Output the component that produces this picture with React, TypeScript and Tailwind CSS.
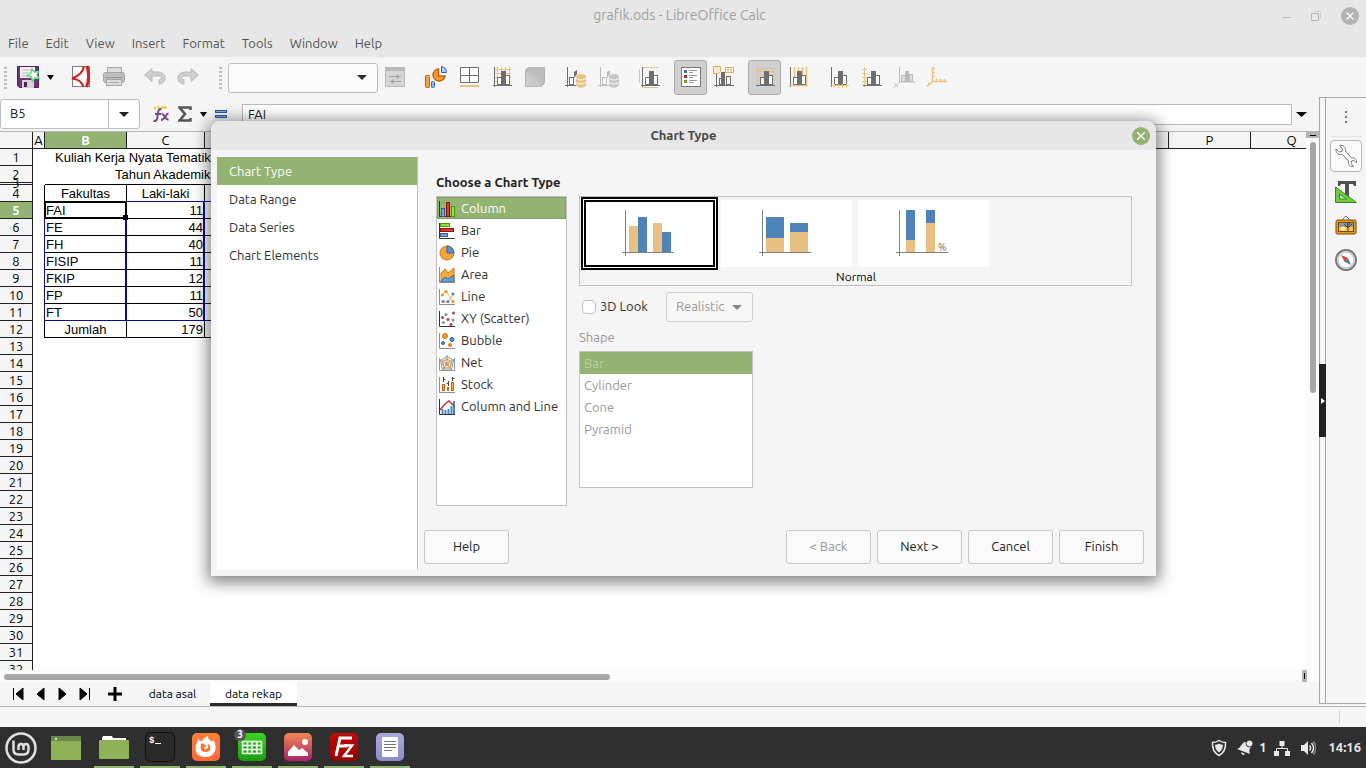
import type { ReactNode } from "react";
import clsx from "clsx";
import { X } from "lucide-react";

const UI_FONT = "font-['Ubuntu','Noto_Sans',sans-serif]";
const CELL_FONT = "font-['Liberation_Sans',Arial,sans-serif]";

const DARK = "#6e6e6e";
const TAN = "#e9c382";
const PALE = "#bdbdbd";

/* ---------- toolbar icons ---------- */

const Icon = ({ children, size = 24 }: { children: ReactNode; size?: number }) => (
  <svg width={size} height={size} viewBox={`0 0 ${size} ${size}`} fill="none" aria-hidden="true" className="shrink-0">
    {children}
  </svg>
);

const Bars = ({ color = DARK, fill = "#fff" }: { color?: string; fill?: string }) => (
  <g>
    <rect x="7.5" y="12.5" width="4" height="7" fill={fill} stroke={color} />
    <rect x="15.5" y="10.5" width="4" height="9" fill={fill} stroke={color} />
    <rect x="11" y="6" width="5" height="14" fill={color} />
  </g>
);

const Axes = ({ x = DARK, y = DARK }: { x?: string; y?: string }) => (
  <g>
    <path d="M4.5 2V22" stroke={y} />
    <path d="M3 20.5H22" stroke={x} />
  </g>
);

const SaveIcon = () => (
  <Icon>
    <path d="M1.5 1.5h21v21h-19l-2-2z" fill="#6b3577" stroke="#4b1f58" />
    <rect x="4" y="2" width="15" height="11" fill="#f2f2f2" />
    <path d="M6 5h9M6 8h7M6 11h8" stroke="#b9b9b9" />
    <rect x="6" y="15" width="12" height="8" fill="#d3d3d3" />
    <rect x="8" y="17" width="3" height="5" fill="#4b1f58" />
    <path d="M16 4l2.500 3 4-.5-1.500 3.500 2 3.500-4-.5-2.500 3-1.200-4-3.800-1.500 3.500-2.500z" fill="#fff" stroke="#5bd67a" strokeWidth="1.500" />
  </Icon>
);

const PdfIcon = () => (
  <Icon>
    <rect x="3.500" y="1.500" width="17" height="20" fill="#fdfdfd" stroke="#7d7d7d" />
    <path d="M15 1C14 7 10 11 3 13.500 9 14 13 17 14.500 22" stroke="#cf2027" strokeWidth="2" />
    <path d="M18 1C20 8 20 16 17.500 22" stroke="#cf2027" strokeWidth="3" />
  </Icon>
);

const PrintIcon = () => (
  <Icon>
    <rect x="5.500" y="2.500" width="14" height="6" fill="#dcdcdc" stroke="#a8a8a8" />
    <rect x="1.500" y="7.500" width="21" height="10" rx="2" fill="#bdbdbd" stroke="#a5a5a5" />
    <path d="M3 12.500h18" stroke="#999" />
    <rect x="4.500" y="14.500" width="15" height="6" fill="#dedede" stroke="#a5a5a5" />
    <path d="M7 17.500h10" stroke="#aaa" />
  </Icon>
);

const UndoIcon = ({ flip = false }: { flip?: boolean }) => (
  <Icon>
    <g transform={flip ? "translate(24 0) scale(-1 1)" : undefined}>
      <path d="M1.500 10L9 3.500V7h5.500c4.500 0 7.500 2.500 7.500 6 0 3-2 6-6 6v-4c1.500 0 2.500-1 2.500-2 0-1.300-1.500-2-4-2H9v5.500z" fill="#cfcfcf" stroke="#b9b9b9" />
    </g>
  </Icon>
);

const PropertiesIcon = () => (
  <Icon>
    <rect x="2.500" y="2.500" width="19" height="19" fill="#d6d6d6" stroke="#bbb" />
    <rect x="2" y="2" width="20" height="4" fill="#b9b9b9" />
    <path d="M6 11.500h12M6 16.500h12" stroke="#a3a3a3" />
    <path d="M14.500 9.500v4M9.500 14.500v4" stroke="#a3a3a3" strokeWidth="2" />
  </Icon>
);

const ChartTypeIcon = () => (
  <Icon>
    <rect x="1.500" y="10.500" width="4" height="12" rx="1" fill="#f6a240" stroke="#c2600a" />
    <rect x="7.500" y="16.500" width="3" height="6" rx="1" fill="#8ab8f0" stroke="#2d62a8" />
    <path d="M14.500 4a6 6 0 1 0 6.500 7h-6.500z" fill="#f69a2e" stroke="#c2600a" strokeWidth="1.500" />
    <path d="M17.500 1.500c3 .5 5 2.500 5 6h-5z" fill="#a9d0f7" stroke="#2d62a8" />
  </Icon>
);

const TableIcon = () => (
  <Icon>
    <path d="M3.500 2.500h18v15h-18zM12.500 2.500v15M3.500 10.500h18" fill="#fff" stroke={DARK} />
    <rect x="3" y="20" width="19" height="2" fill={TAN} />
  </Icon>
);

const GridIcon = () => (
  <Icon>
    <path d="M7.500 2v18M11.500 2v18M15.500 2v18M19.500 2v18M4 4.500h17M4 8.500h17M4 12.500h17M4 16.500h17" stroke={TAN} />
    <Bars />
    <Axes />
  </Icon>
);

const CubeIcon = () => (
  <Icon>
    <defs>
      <linearGradient id="cube" x1="1" y1="0" x2="0" y2="1">
        <stop offset="0" stopColor="#b9b9b9" />
        <stop offset="1" stopColor="#d4d4d4" />
      </linearGradient>
    </defs>
    <path d="M2.500 7c0-3 1.500-4.500 4.500-4.500h14.500V16c0 3.500-2 5.500-5 5.500h-14z" fill="#bcbcbc" stroke="#b3b3b3" />
    <rect x="3" y="7" width="14" height="14" fill="url(#cube)" />
  </Icon>
);

const DataIcon = ({ color = DARK, disk = TAN }: { color?: string; disk?: string }) => (
  <Icon>
    <path d="M3.500 2v20M1 20.500h11" stroke={color} />
    <rect x="5.500" y="12.500" width="4" height="7" fill="#fff" stroke={color} />
    <path d="M10 7l3-2v4l-3 4z" fill={color} />
    <path d="M12 12v8c0 3.500 10 3.500 10 0v-8z" fill={disk} />
    <ellipse cx="17" cy="11.500" rx="5" ry="2.500" fill={disk} />
    <path d="M12 13c1 2.500 9 2.500 10 0M12 17c1 2.500 9 2.500 10 0" stroke="#fff" />
  </Icon>
);

const TitlesIcon = () => (
  <Icon>
    <path d="M4 2.500h16M4 22.500h16M1.500 4v14" stroke={TAN} />
    <Bars />
    <Axes />
  </Icon>
);

const LegendIcon = () => (
  <Icon>
    <rect x="2.500" y="2.500" width="19" height="19" fill="#fff" stroke="#777" />
    <rect x="5" y="5" width="3" height="3" fill="#3f6fa8" />
    <rect x="5" y="10" width="3" height="3" fill="#b82020" />
    <rect x="5" y="15" width="3" height="3" fill="#62a818" />
    <path d="M10 5.500h8M10 7.500h4M10 10.500h8M10 12.500h4M10 15.500h8M10 17.500h4" stroke="#999" />
  </Icon>
);

const LabelsIcon = () => (
  <Icon>
    <path d="M4.500 8v14M2 20.500h20" stroke={DARK} />
    <rect x="7.500" y="13.500" width="3" height="6" fill="#fff" stroke={DARK} />
    <rect x="9" y="7" width="4" height="13" fill={DARK} />
    <rect x="14.500" y="11.500" width="4" height="8" fill="#fff" stroke={DARK} />
    <path d="M1.500 1.500h7v5l-2 2h-5z" fill="#f8ebcf" stroke="#d9ad55" />
    <rect x="13.500" y="2.500" width="8" height="5" fill="#fff" stroke="#d9b35f" />
    <path d="M15 4.500h2M18 4.500h2M15 6h2M18 6h2" stroke="#d9b35f" />
  </Icon>
);

const HorizontalGridIcon = () => (
  <Icon>
    <path d="M3 3.500h19M3 6.500h19M3 9.500h19M3 12.500h19M3 15.500h19" stroke={TAN} />
    <Bars />
    <path d="M4.500 2v20" stroke={TAN} />
    <path d="M3 20.500h19" stroke={DARK} />
  </Icon>
);

const VerticalGridIcon = () => (
  <Icon>
    <path d="M8.500 2v20M12.500 2v20M16.500 2v20M20.500 2v20" stroke={TAN} strokeWidth="1.500" />
    <Bars />
    <Axes x={TAN} />
  </Icon>
);

const XAxisIcon = () => (
  <Icon>
    <Bars />
    <Axes x={TAN} />
    <path d="M7.500 19v4M11.500 19v4M15.500 19v4M19.500 19v4" stroke={TAN} />
  </Icon>
);

const YAxisIcon = () => (
  <Icon>
    <Bars />
    <Axes y={TAN} />
    <path d="M2 4.500h5M2 8.500h5M2 12.500h5M2 16.500h5" stroke={TAN} />
  </Icon>
);

const ZAxisIcon = () => (
  <Icon>
    <path d="M6.500 2v15h16M6.500 17L1 22.500M1 18l4 4" stroke={PALE} />
    <rect x="8.500" y="10.500" width="4" height="6" fill="#ddd" stroke={PALE} />
    <rect x="12" y="6" width="4" height="11" fill={PALE} />
    <rect x="16.500" y="9.500" width="3" height="7" fill="#ddd" stroke={PALE} />
  </Icon>
);

const AllAxesIcon = () => (
  <Icon>
    <path d="M6.500 2v14.500H21M6.500 16.500L1 21.500M6 3.500h3M6 7.500h3M6 11.500h3M10.500 14v3M14.500 14v3M18.500 14v3M2 18l2 2" stroke={TAN} strokeWidth="1.500" />
  </Icon>
);

const Caret = ({ width = 9 }: { width?: number }) => (
  <svg width={width} height="5" viewBox="0 0 10 5" preserveAspectRatio="none" aria-hidden="true">
    <path d="M0 0h10L5 5z" fill="currentColor" />
  </svg>
);

/* ---------- chart type icons ---------- */

const SmallAxes = ({ color = "#8d8d8d" }: { color?: string }) => <path d="M.5 0v15.500H16" stroke={color} />;

const chartIcons: Record<string, ReactNode> = {
  Column: (
    <>
      <SmallAxes color="#333" />
      <rect x="2.500" y="7.500" width="3" height="8" fill="#7aa3cf" stroke="#355f8f" />
      <rect x="7.500" y="1.500" width="3" height="14" fill="#e03535" stroke="#8f1010" />
      <rect x="12.500" y="5.500" width="3" height="10" fill="#8ae234" stroke="#4e9a06" />
    </>
  ),
  Bar: (
    <>
      <SmallAxes color="#333" />
      <rect x="1.500" y=".5" width="9" height="3" fill="#8ae234" stroke="#4e9a06" />
      <rect x="1.500" y="5.500" width="13" height="3" fill="#e03535" stroke="#8f1010" />
      <rect x="1.500" y="10.500" width="7" height="3" fill="#7aa3cf" stroke="#355f8f" />
    </>
  ),
  Pie: (
    <>
      <circle cx="8" cy="8" r="7" fill="#f9a23c" stroke="#d0761a" />
      <path d="M8 8V1a7 7 0 0 1 7 7z" fill="#5b93d3" stroke="#2d62a8" />
    </>
  ),
  Area: (
    <>
      <path d="M2 6l4-4 3 4 6-5v14H2z" fill="#f9a93c" stroke="#cb7818" />
      <path d="M2 14l4-4 3 2 6-4v7H2z" fill="#6b9fd8" stroke="#3465a4" />
      <SmallAxes />
    </>
  ),
  Line: (
    <>
      <SmallAxes />
      <path d="M3 6l4-4 7 11M4 13h5l5-8" stroke="#f0ad5a" />
      <circle cx="3.500" cy="6" r="1.500" fill="#f08a1c" />
      <circle cx="7" cy="2.500" r="1.500" fill="#f08a1c" />
      <circle cx="14" cy="12.500" r="1.500" fill="#f08a1c" />
      <circle cx="4" cy="12.500" r="1.500" fill="#4f83c0" />
      <circle cx="9" cy="12.500" r="1.500" fill="#4f83c0" />
      <circle cx="14" cy="5" r="1.500" fill="#4f83c0" />
    </>
  ),
  "XY (Scatter)": (
    <>
      <SmallAxes color="#333" />
      <circle cx="3.500" cy="6.500" r="1.500" fill="#c23a4a" />
      <circle cx="9" cy="8.500" r="1.500" fill="#c23a4a" />
      <circle cx="14.500" cy="2" r="1.500" fill="#c23a4a" />
      <circle cx="12" cy="13.500" r="1.500" fill="#c23a4a" />
      <circle cx="7" cy="3.500" r="1.500" fill="#6e93c0" />
      <circle cx="4.500" cy="11.500" r="1.500" fill="#6e93c0" />
      <circle cx="14" cy="9" r="1.500" fill="#6e93c0" />
    </>
  ),
  Bubble: (
    <>
      <SmallAxes />
      <circle cx="6" cy="3" r="2.500" fill="#f59a35" stroke="#d0701a" />
      <circle cx="13" cy="6.500" r="2" fill="#5b8fcc" stroke="#2d5f9e" />
      <circle cx="4" cy="10" r="1.500" fill="#5b8fcc" stroke="#2d5f9e" />
      <circle cx="11" cy="12" r="1.500" fill="#f59a35" stroke="#d0701a" />
    </>
  ),
  Net: (
    <>
      <path d="M8 1.500l6.500 4-2 9.500h-9l-2-9.500zM8 0v8M16 4L8 8.500 13 16M3 16l5-7.500L0 4M.5 3v12.500h15V3" stroke="#7d98b8" />
      <path d="M8 4l4.500 3-1.500 6H5L3.500 7z" stroke="#ee9a3a" strokeWidth="1.500" />
      <path d="M8 7l2 1.500-1 2H7l-1-2z" stroke="#ee9a3a" />
    </>
  ),
  Stock: (
    <>
      <SmallAxes />
      <path d="M4.500 0v5M4.500 2.500h2M9.500 4v5M7.500 6.500h2M13.500 0v4M13.500 1.500h2" stroke="#444" />
      <rect x="3.500" y="7.500" width="2" height="6" fill="#f9a23c" stroke="#c9651a" />
      <rect x="8.500" y="10.500" width="1" height="3" fill="#f9a23c" stroke="#c9651a" />
      <rect x="12.500" y="5.500" width="2" height="8" fill="#f9a23c" stroke="#c9651a" />
    </>
  ),
  "Column and Line": (
    <>
      <path d="M3.500 15v-5M6.500 15v-4M9.500 15v-5M12.500 15V7M15 15V2" stroke="#4f83c0" strokeWidth="2" />
      <path d="M1 11l5-6 4-3 5 5" stroke="#c9303c" strokeWidth="1.500" />
      <SmallAxes color="#333" />
    </>
  ),
};

const chartTypes = Object.keys(chartIcons);

/* ---------- window chrome ---------- */

const TitleBar = () => (
  <div className="grid h-[31px] grid-cols-[1fr_auto_1fr] items-center bg-[#e7e7e7] pr-[7px] text-[14px] text-[#a0a0a0]">
    <span />
    <h1>grafik.ods - LibreOffice Calc</h1>
    <div className="flex items-center justify-end gap-5 text-[#b3b3b3]">
      <button type="button" aria-label="Minimize" className="flex h-4 w-2 items-center">
        <span className="mt-1 h-px w-2 bg-current" />
      </button>
      <button type="button" aria-label="Restore">
        <svg width="10" height="10" viewBox="0 0 10 10" fill="none">
          <path d="M.5 2.500h7v7h-7z" stroke="currentColor" />
          <path d="M3 .5h6.500V7" stroke="#cfcfcf" />
        </svg>
      </button>
      <button type="button" aria-label="Close" className="flex size-[18px] items-center justify-center rounded-full bg-[#b3b3b3] text-white">
        <X size={12} strokeWidth={2.500} />
      </button>
    </div>
  </div>
);

const menus = ["File", "Edit", "View", "Insert", "Format", "Tools", "Window", "Help"];

const MenuBar = () => (
  <nav className="flex h-[27px] items-center gap-[17px] border-b border-[#efefef] bg-[#e7e7e7] px-2 text-[13px] text-[#555]">
    {menus.map((menu) => (
      <button key={menu} type="button">{menu}</button>
    ))}
  </nav>
);

const Tool = ({ label, children, pressed = false }: { label: string; children: ReactNode; pressed?: boolean }) => (
  <button
    type="button"
    aria-label={label}
    aria-pressed={pressed}
    className={clsx(
      "flex h-[35px] w-[33px] shrink-0 items-center justify-center rounded-[3px] border pb-px pl-px",
      pressed ? "border-[#a9a9a9] bg-[#d0d0d0]" : "border-transparent"
    )}
  >
    {children}
  </button>
);

const Grip = () => (
  <div className="flex w-[11px] shrink-0 flex-col items-center gap-0.5">
    {[0, 1, 2, 3, 4, 5].map((i) => (
      <span key={i} className="h-0.5 w-[3px] bg-[#bcbcbc]" />
    ))}
  </div>
);

const Toolbar = () => (
  <div className="flex h-[39px] items-center bg-[#f5f5f5]">
    <Grip />
    <Tool label="Save"><SaveIcon /></Tool>
    <button type="button" aria-label="Save options" className="flex h-8 w-3 items-center justify-center text-black">
      <Caret width={7} />
    </button>
    <div className="ml-2 flex">
      <Tool label="Export as PDF"><PdfIcon /></Tool>
      <Tool label="Print"><PrintIcon /></Tool>
    </div>
    <div className="ml-2 flex">
      <Tool label="Undo"><UndoIcon /></Tool>
      <Tool label="Redo"><UndoIcon flip /></Tool>
    </div>
    <div className="ml-[11px]"><Grip /></div>
    <div className="relative ml-0.5 w-[150px]">
      <select aria-label="Chart element" className="block h-[30px] w-full appearance-none rounded-[3px] border border-[#bdbdbd] bg-[#fafafa]">
        <option> </option>
      </select>
      <span className="pointer-events-none absolute inset-y-0 right-[11px] flex items-center text-[#2b2b2b]">
        <Caret width={10} />
      </span>
    </div>
    <div className="flex gap-2">
      <Tool label="Format selection"><PropertiesIcon /></Tool>
      <div className="flex">
        <Tool label="Chart type"><ChartTypeIcon /></Tool>
        <Tool label="Data table"><TableIcon /></Tool>
        <Tool label="Grids"><GridIcon /></Tool>
        <Tool label="3D view"><CubeIcon /></Tool>
      </div>
      <div className="flex">
        <Tool label="Data ranges"><DataIcon /></Tool>
        <Tool label="Data series"><DataIcon color={PALE} disk="#c6c6c6" /></Tool>
      </div>
      <Tool label="Titles"><TitlesIcon /></Tool>
      <div className="flex">
        <Tool label="Legend" pressed><LegendIcon /></Tool>
        <Tool label="Data labels"><LabelsIcon /></Tool>
      </div>
      <div className="flex">
        <Tool label="Horizontal grids" pressed><HorizontalGridIcon /></Tool>
        <Tool label="Vertical grids"><VerticalGridIcon /></Tool>
      </div>
      <div className="flex">
        <Tool label="X axis"><XAxisIcon /></Tool>
        <Tool label="Y axis"><YAxisIcon /></Tool>
        <Tool label="Z axis"><ZAxisIcon /></Tool>
        <Tool label="All axes"><AllAxesIcon /></Tool>
      </div>
    </div>
  </div>
);

const FormulaBar = () => (
  <div className="flex h-[35px] items-center border-b border-[#b5b5b5] bg-[#f5f5f5] text-[13px] text-[#222]">
    <div className="flex h-[30px] w-[140px] shrink-0 rounded-[3px] border border-[#bdbdbd] bg-white">
      <input aria-label="Name box" defaultValue="B5" className="w-[108px] border-r border-[#bdbdbd] px-[9px] outline-none" />
      <button type="button" aria-label="Name box list" className="flex flex-1 items-center justify-center">
        <Caret width={10} />
      </button>
    </div>
    <button type="button" aria-label="Function wizard" className="ml-3 flex w-[18px] justify-center">
      <svg width="18" height="18" viewBox="0 0 18 18" fill="none">
        <path d="M2 4l2-2M6 3l1-2M9 2l4 1M12 2l3 1" stroke="#f0c93a" strokeWidth="2" />
        <path d="M9.500 4.500c-2-1-3 0-3.300 2.500l-1 6c-.4 2.500-1.700 3.500-3.700 2.500M3 9h6" stroke="#7a4490" strokeWidth="2" />
        <path d="M9.500 9c3-1 3 6 7 5.500M16.500 8.500c-3 0-3.500 6.500-7.500 6.500" stroke="#7a4490" strokeWidth="2" />
      </svg>
    </button>
    <button type="button" aria-label="Select function" className="ml-2 flex items-center gap-2 text-black">
      <svg width="14" height="16" viewBox="0 0 14 16" fill="none">
        <path d="M12.500 4V1.500h-11L7 8l-5.500 6.500h11V12" stroke="#555" strokeWidth="2.500" />
      </svg>
      <Caret width={7} />
    </button>
    <button type="button" aria-label="Formula" className="ml-2 flex w-3 flex-col gap-0.5">
      <span className="h-[3px] w-full border border-[#2d5a9a] bg-[#7fa6d8]" />
      <span className="h-[3px] w-full border border-[#2d5a9a] bg-[#7fa6d8]" />
    </button>
    <input
      aria-label="Formula input"
      defaultValue="FAI"
      className="ml-[15px] h-[21px] min-w-0 flex-1 border border-[#b9b9b9] bg-white px-[5px] outline-none"
    />
    <button type="button" aria-label="Expand formula bar" className="flex w-[27px] pl-1 text-black">
      <Caret width={11} />
    </button>
  </div>
);

/* ---------- sheet ---------- */

const data: Record<number, [string, string]> = {
  4: ["Fakultas", "Laki-laki"],
  5: ["FAI", "11"],
  6: ["FE", "44"],
  7: ["FH", "40"],
  8: ["FISIP", "11"],
  9: ["FKIP", "12"],
  10: ["FP", "11"],
  11: ["FT", "50"],
  12: ["Jumlah", "179"],
};

const rowNumbers = Array.from({ length: 32 }, (_, i) => i + 1);

const HeadCell = ({ children, active = false }: { children?: ReactNode; active?: boolean }) => (
  <th
    scope="col"
    className={clsx(
      "h-[17px] border-r border-b border-[#222] p-0",
      active ? "bg-[#92b372] font-bold text-white" : "bg-[#f5f5f5] font-normal"
    )}
  >
    {children}
  </th>
);

const RowCells = ({ row }: { row: number }) => {
  if (row === 1) {
    return <><td className="p-0" /><td colSpan={3} className="p-0 pl-[10px] whitespace-nowrap">Kuliah Kerja Nyata Tematik</td></>;
  }
  if (row === 2) {
    return <><td className="p-0" /><td colSpan={3} className="p-0 pl-[70px] whitespace-nowrap">Tahun Akademik</td></>;
  }
  if (row === 3) {
    return <><td className="p-0" />{[0, 1, 2].map((i) => <td key={i} className="border-b border-black p-0" />)}</>;
  }
  const cells = data[row];
  if (!cells) return null;

  const ranged = row >= 5 && row <= 11;
  const centered = row === 4 || row === 12;
  const cell = "p-0 pt-0.5 leading-[14px]";
  const side = ranged ? "border-r-2 border-r-[#0c0c8c]" : "border-r border-r-black";
  const bottom = row === 4 || row === 11 ? "border-b border-b-[#0c0c8c]" : "border-b border-b-black";

  return (
    <>
      <td className={clsx("p-0", ranged ? "border-r border-r-[#0c0c8c]" : "border-r border-r-black")} />
      <td className={clsx(cell, "relative", side, row === 4 ? "border-b border-b-black" : bottom, centered ? "text-center" : "pl-px")}>
        {cells[0]}
        {row === 5 && (
          <span className="absolute -inset-px -right-0.5 border-2 border-black">
            <span className="absolute -right-[3px] -bottom-[3px] size-[5px] bg-black" />
          </span>
        )}
      </td>
      <td className={clsx(cell, side, bottom, row === 4 ? "text-center" : "text-right", row === 12 && "pr-px")}>{cells[1]}</td>
      <td className={clsx("p-0", bottom)} />
    </>
  );
};

const Sheet = () => (
  <div className="min-h-0 flex-1 overflow-hidden bg-white">
    <table className={clsx("w-[calc(100%+27px)] table-fixed border-separate border-spacing-0 text-[13px] leading-4 text-black", UI_FONT)}>
      <colgroup>
        <col className="w-[33px]" />
        <col className="w-3" />
        <col className="w-[82px]" />
        <col className="w-[78px]" />
        <col className="w-[82px]" />
        <col />
        <col className="w-[82px]" />
        <col className="w-[82px]" />
      </colgroup>
      <thead>
        <tr>
          <HeadCell />
          <HeadCell>A</HeadCell>
          <HeadCell active>B</HeadCell>
          <HeadCell>C</HeadCell>
          <HeadCell />
          <HeadCell />
          <HeadCell>P</HeadCell>
          <HeadCell>Q</HeadCell>
        </tr>
      </thead>
      <tbody>
        {rowNumbers.map((row) => (
          <tr key={row} className={CELL_FONT}>
            <th
              scope="row"
              className={clsx(
                "border-r border-b border-[#222] p-0",
                UI_FONT,
                row === 3 ? "h-0.5" : "h-[17px]",
                row === 5 ? "bg-[#92b372] font-bold text-white" : "bg-[#f5f5f5] font-normal"
              )}
            >
              {row === 3 ? <div className="flex h-px items-center justify-center leading-none">3</div> : row}
            </th>
            <RowCells row={row} />
          </tr>
        ))}
      </tbody>
    </table>
  </div>
);

const tabArrows = [
  { label: "First sheet", path: "M1.500 1v12M11 1v12L4 7z" },
  { label: "Previous sheet", path: "M10 1v12L3 7z" },
  { label: "Next sheet", path: "M3 1v12l7-6z" },
  { label: "Last sheet", path: "M2 1v12l7-6zM11.500 1v12" },
];

const SheetTabs = () => (
  <div className="flex h-6 items-center bg-[#f5f5f5] pl-3 text-[12px] text-black">
    <div className="flex gap-[9px]">
      {tabArrows.map((arrow) => (
        <button key={arrow.label} type="button" aria-label={arrow.label}>
          <svg width="13" height="14" viewBox="0 0 13 14">
            <path d={arrow.path} fill="black" stroke="black" strokeWidth="1" />
          </svg>
        </button>
      ))}
    </div>
    <button type="button" aria-label="Add sheet" className="ml-4">
      <svg width="16" height="16" viewBox="0 0 16 16">
        <path d="M8 1v14M1 8h14" stroke="black" strokeWidth="3" />
      </svg>
    </button>
    <button type="button" className="ml-3 h-full w-[75px]">data asal</button>
    <button type="button" className="h-full w-[87px] border-b-[3px] border-[#2b2b2b] bg-white pt-0.5">data rekap</button>
  </div>
);

const SheetArea = () => (
  <div className="flex min-h-0 flex-1 flex-col">
    <div className="flex min-h-0 flex-1">
      <div className="flex min-w-0 flex-1 flex-col">
        <Sheet />
      </div>
      <div className="flex w-[13px] flex-col items-center bg-[#fbfbfb]">
        <div className="flex h-1.5 w-full items-center justify-center bg-[#b5b5b5]">
          <span className="h-px w-1.5 bg-black" />
        </div>
        <div className="mt-1 h-[251px] w-1.5 rounded-sm bg-[#a6a6a6]" />
      </div>
    </div>
    <div className="flex h-3 items-end justify-between bg-[#fbfbfb] pr-3 pl-1">
      <div className="mb-0.5 h-1.5 w-[606px] rounded-sm bg-[#a6a6a6]" />
      <div className="flex h-full w-[5px] items-center justify-center bg-[#b5b5b5]">
        <span className="h-1.5 w-px bg-black" />
      </div>
    </div>
    <SheetTabs />
  </div>
);

/* ---------- sidebar ---------- */

const Sidebar = () => (
  <aside className="mb-0.5 flex border-y border-[#a9a9a9] bg-[#f5f5f5]">
    <div className="flex w-[7px] flex-col items-center justify-center border-x border-[#a9a9a9]">
      <button type="button" aria-label="Hide sidebar" className="flex h-[73px] w-[7px] items-center justify-center bg-[#222]">
        <svg width="4" height="6" viewBox="0 0 4 6"><path d="M0 0l4 3-4 3z" fill="#fff" /></svg>
      </button>
    </div>
    <div className="flex w-10 flex-col items-center">
      <button type="button" aria-label="Sidebar settings" className="flex h-[39px] w-8 flex-col items-center justify-center gap-[3px] border-b border-[#e3e3e3]">
        <span className="size-0.5 bg-[#777]" />
        <span className="size-0.5 bg-[#777]" />
        <span className="size-0.5 bg-[#777]" />
      </button>
      <button type="button" aria-label="Properties" className="mt-[3px] flex size-8 items-center justify-center rounded border border-[#b5b5b5] bg-[#fafafa]">
        <Icon>
          <path
            d="M2 5l3.500 3 2.500-.5L8.500 5 5.500 1.500C9 .5 12 3 11.500 7l6 7c3-.8 5.500 1.500 5 5l-2.500-2.500-2.500.5-.3 2.500 2.300 3c-3.500.5-6-2-5-5.500l-6-6.500C5 11.500 1.500 9 2 5z"
            fill="#fff" stroke="#777"
          />
        </Icon>
      </button>
      <button type="button" aria-label="Styles" className="mt-1.5 flex h-7 w-8 items-center justify-center">
        <Icon>
          <path d="M4 1h18v5h-2l-1-2h-4v13h-4V4H7L6 6H4z" fill="#4d5154" />
          <path d="M1.500 7v15.500h21z" fill="#6ecb3a" stroke="#35891a" />
          <path d="M5.500 14v5h7z" fill="#c6eeb0" stroke="#35891a" />
        </Icon>
      </button>
      <button type="button" aria-label="Gallery" className="mt-1.5 flex h-7 w-8 items-center justify-center">
        <Icon>
          <path d="M8 6l4-4 4 4" stroke="#777" />
          <rect x="2" y="6" width="20" height="14" rx="1.500" fill="#e89b1c" stroke="#7a4a05" />
          <rect x="4.500" y="8.500" width="15" height="9" fill="#f4c46a" stroke="#7a4a05" />
          <path d="M5 9h14v4H5z" fill="#829cb3" />
          <path d="M14 17v-3l-4-4M14 14l4-4M13.500 13V9M14 12l2-3" stroke="#5a3b14" />
          <circle cx="9" cy="14.500" r="2" fill="#fff2a8" />
        </Icon>
      </button>
      <button type="button" aria-label="Navigator" className="mt-1.5 flex h-7 w-8 items-center justify-center">
        <Icon>
          <circle cx="12" cy="12" r="10" fill="#fff" stroke="#777" strokeWidth="2" />
          <circle cx="12" cy="12" r="8" stroke="#c9c9c9" strokeWidth="1.500" />
          <path d="M7 7l7 3-3.500 3.500z" fill="#e23b3b" />
          <path d="M17 17l-7-3.500L14 10z" fill="#5a79a8" />
        </Icon>
      </button>
    </div>
  </aside>
);

/* ---------- wizard dialog ---------- */

const steps = ["Chart Type", "Data Range", "Data Series", "Chart Elements"];
const shapes = ["Bar", "Cylinder", "Cone", "Pyramid"];
const BLUE = "#4d83b8";
const SAND = "#e8c182";

const previews = [
  {
    label: "Normal",
    bars: [[7, 16, 9, 26, SAND], [16, 7, 9, 35, BLUE], [31, 13, 9, 29, SAND], [40, 22, 9, 20, BLUE]],
  },
  {
    label: "Stacked",
    bars: [[7, 28, 18, 14, SAND], [7, 7, 18, 21, BLUE], [31, 22, 18, 20, SAND], [31, 13, 18, 9, BLUE]],
  },
  {
    label: "Percent stacked",
    percent: true,
    bars: [[10, 30, 9, 12, SAND], [10, 0, 9, 30, BLUE], [30, 13, 9, 29, SAND], [30, 0, 9, 13, BLUE]],
  },
] as const;

const dialogButton = "h-[34px] w-[85px] rounded-[3px] border border-[#c6c6c6] bg-[#fafafa] disabled:text-[#999]";

const ChartPreviews = () => (
  <div className="h-[90px] w-[553px] border border-[#c2c2c2] bg-[#f5f5f5] pl-px">
    <div className="flex">
      {previews.map((preview, index) => (
        <button
          key={preview.label}
          type="button"
          aria-label={preview.label}
          aria-pressed={index === 0}
          className={clsx(
            "flex h-[73px] w-[137px] items-center justify-center",
            index === 0 ? "border-[5px] border-double border-black bg-white" : "p-[3px]"
          )}
        >
          <span className="flex size-full items-center justify-center bg-white">
            <svg width="55" height="47" viewBox="0 0 55 47">
              {preview.bars.map(([x, y, width, height, fill]) => (
                <rect key={`${x}-${y}`} x={x} y={y} width={width} height={height} fill={fill} />
              ))}
              <path d="M3.500 0v46M0 42.500h52" stroke="#808080" />
              {"percent" in preview && (
                <text x="42" y="41" fontSize="10" fill="#777" fontFamily="Noto Sans">%</text>
              )}
            </svg>
          </span>
        </button>
      ))}
    </div>
    <p className="text-center text-[12px] leading-[14px] text-black">Normal</p>
  </div>
);

const ChartWizard = () => (
  <section
    role="dialog"
    aria-labelledby="wizard-title"
    className="absolute top-[121px] left-[211px] flex h-[455px] w-[945px] flex-col overflow-hidden rounded-t-[9px] bg-[#f5f5f5] text-[13px] text-[#303030] shadow-[0_3px_16px_3px_rgba(0,0,0,0.5)]"
  >
    <header className="grid h-[29px] shrink-0 grid-cols-[1fr_auto_1fr] items-center bg-[#e7e7e7] px-1.5">
      <span />
      <h2 id="wizard-title" className="font-bold text-[#484848]">Chart Type</h2>
      <button type="button" aria-label="Close dialog" className="flex size-[18px] items-center justify-center justify-self-end rounded-full bg-[#92b372] text-white">
        <X size={14} strokeWidth={2} />
      </button>
    </header>
    <div className="flex flex-1 gap-1.5 p-1.5 pr-3">
      <nav className="w-[201px] shrink-0 border-r border-[#c2c2c2] bg-white pt-px">
        {steps.map((step, index) => (
          <button
            key={step}
            type="button"
            className={clsx("flex h-7 w-full items-center px-3 pt-0.5", index === 0 && "bg-[#92b372] text-white")}
          >
            {step}
          </button>
        ))}
      </nav>
      <div className="flex flex-1 flex-col">
        <div className="flex-1 px-3 pt-4">
          <h3 className="leading-5 font-bold text-[#222]">Choose a Chart Type</h3>
          <div className="mt-1 flex gap-3">
            <div role="listbox" aria-label="Chart type" className="h-[310px] w-[131px] border border-[#c2c2c2] bg-white">
              {chartTypes.map((type, index) => (
                <button
                  key={type}
                  type="button"
                  role="option"
                  aria-selected={index === 0}
                  className={clsx(
                    "flex h-[22px] w-full items-center gap-1.5 border border-dotted pt-0.5 pl-px whitespace-nowrap",
                    index === 0 ? "border-[#6f9150] bg-[#92b372] text-white" : "border-transparent"
                  )}
                >
                  <Icon size={16}>{chartIcons[type]}</Icon>
                  {type}
                </button>
              ))}
            </div>
            <div>
              <ChartPreviews />
              <div className="mt-1.5 flex items-center gap-[18px]">
                <label className="flex items-center gap-1 pl-[3px] text-[#303030]">
                  <input type="checkbox" className="size-[14px] appearance-none rounded-sm border border-[#c2c2c2] bg-white" />
                  3D Look
                </label>
                <div className="relative">
                  <select
                    disabled
                    aria-label="3D scheme"
                    className="block h-[30px] w-[87px] appearance-none rounded-[3px] border border-[#cfcfcf] bg-[#f7f7f7] pl-[9px] text-[#999] opacity-100"
                  >
                    <option>Realistic</option>
                  </select>
                  <span className="pointer-events-none absolute inset-y-0 right-[11px] flex items-center text-[#888]">
                    <Caret width={10} />
                  </span>
                </div>
              </div>
              <h4 id="shape-label" className="mt-[5px] leading-5 text-[#999]">Shape</h4>
              <div role="listbox" aria-labelledby="shape-label" className="mt-1 h-[137px] w-[174px] border border-[#c2c2c2] bg-white">
                {shapes.map((shape, index) => (
                  <button
                    key={shape}
                    type="button"
                    role="option"
                    aria-selected={index === 0}
                    disabled
                    className={clsx(
                      "flex h-[22px] w-full items-center pt-0.5 pl-1",
                      index === 0 ? "bg-[#92b372] text-[#b9d0a3]" : "text-[#999]"
                    )}
                  >
                    {shape}
                  </button>
                ))}
              </div>
            </div>
          </div>
        </div>
        <footer className="flex justify-between pb-1.5 text-[#222]">
          <button type="button" className={dialogButton}>Help</button>
          <div className="flex gap-1.5">
            <button type="button" disabled className={dialogButton}>&lt; Back</button>
            <button type="button" className={dialogButton}>Next &gt;</button>
            <button type="button" className={dialogButton}>Cancel</button>
            <button type="button" className={dialogButton}>Finish</button>
          </div>
        </footer>
      </div>
    </div>
  </section>
);

/* ---------- desktop panel ---------- */

const Tile = ({ from, to }: { from: string; to: string }) => {
  const id = `tile-${from.slice(1)}`;
  return (
    <>
      <defs>
        <linearGradient id={id} x1="0" y1="0" x2="0" y2="1">
          <stop offset="0" stopColor={from} />
          <stop offset="1" stopColor={to} />
        </linearGradient>
      </defs>
      <rect x="1" y="1" width="28" height="28" rx="5" fill={`url(#${id})`} />
    </>
  );
};

const apps: { name: string; icon: ReactNode; badge?: string }[] = [
  {
    name: "Files",
    icon: (
      <>
        <path d="M3 9V5h7l2 2h15v3z" fill="#fff" />
        <path d="M4 4h9l1 2h13v4H4z" fill="#fff" />
        <rect y="8" width="30" height="19" rx="1" fill="#8fb158" />
      </>
    ),
  },
  {
    name: "Terminal",
    icon: (
      <>
        <rect x=".5" y=".5" width="29" height="29" rx="5" fill="#2a2a2a" stroke="#111" />
        <text x="4" y="11" fontSize="9" fontWeight="bold" fill="#fff" fontFamily="Liberation Mono">$</text>
        <path d="M10 11.500h6" stroke="#fff" />
      </>
    ),
  },
  {
    name: "Firefox",
    icon: (
      <>
        <Tile from="#ff7f3a" to="#ff6a38" />
        <path d="M8 7c0 2 1 2 3 2 1-2 3-4 6-5-1 3 3 4 4 6l1-2c5 6 3 17-7 17C4 25 3 16 6 11c0-2 1-3 2-4z" fill="#fff" />
        <path d="M10 12c2-1 3 0 4 1 2 0 2 1 0 2-2 0-1 2 1 2 2 0 3-3 1-6 5 3 4 9-1 9S9 17 10 12z" fill="#ff7239" />
      </>
    ),
  },
  {
    name: "Calc",
    badge: "3",
    icon: (
      <>
        <Tile from="#3cd327" to="#1a9d10" />
        <path d="M5.500 9.500h19v12h-19zM10.500 9.500v12M15 9.500v12M20 9.500v12M5.500 13.500h19M5.500 17.500h19" fill="none" stroke="#fff" strokeWidth="1.500" />
      </>
    ),
  },
  {
    name: "Image viewer",
    icon: (
      <>
        <Tile from="#f48652" to="#a6256d" />
        <circle cx="22" cy="10" r="3" fill="#fff" />
        <path d="M5 24v-4l6-7 5 5 3-2 6 5v3z" fill="#fff" />
      </>
    ),
  },
  {
    name: "FileZilla",
    icon: (
      <>
        <Tile from="#c00b0b" to="#9b0000" />
        <path d="M7 24L11 6h12M9.500 14h9" fill="none" stroke="#fff" strokeWidth="3" />
        <path d="M15 13.500h8l-8 10.500h9" fill="none" stroke="#fff" strokeWidth="2.500" />
      </>
    ),
  },
  {
    name: "Text editor",
    icon: (
      <>
        <Tile from="#a9a8dd" to="#8e8cc8" />
        <rect x="7" y="5" width="16" height="20" rx="1" fill="#fff" />
        <path d="M9 9.500h12M9 12.500h12M9 15.500h12M9 18.500h8" stroke="#777" />
      </>
    ),
  },
];

const AppIcon = ({ children }: { children: ReactNode }) => (
  <svg width="30" height="30" viewBox="0 0 30 30" aria-hidden="true">{children}</svg>
);

const Taskbar = () => (
  <footer className="flex h-[41px] shrink-0 items-center justify-between bg-[#2f2f2f] pr-[5px] pl-[5px] text-[#e8e8e8]">
    <div className="flex h-full items-center">
      <button type="button" aria-label="Menu">
        <svg width="32" height="32" viewBox="0 0 32 32" fill="none">
          <circle cx="16" cy="16" r="14.500" stroke="#e0e0e0" strokeWidth="2.500" />
          <path d="M8.500 8.500v9c0 3.500 1.500 5 5 5h5c3.500 0 5-1.500 5-5V15c0-4-5-4-5 0v3M18.500 15c0-4-5-4-5 0v3" stroke="#e0e0e0" strokeWidth="2.500" />
        </svg>
      </button>
      <button type="button" aria-label="Show desktop" className="ml-[14px]">
        <AppIcon>
          <rect y="3" width="30" height="24" fill="#8fb158" />
          <rect y="3" width="30" height="5" fill="#6b8845" />
          <circle cx="5" cy="6" r="1" fill="#fff" />
        </AppIcon>
      </button>
      <div className="ml-[13px] flex h-full gap-1.5">
        {apps.map((app) => (
          <button
            key={app.name}
            type="button"
            aria-label={app.name}
            className="relative flex h-full w-10 items-center justify-center border-b-2 border-[#92b372] pt-px"
          >
            <AppIcon>{app.icon}</AppIcon>
            {app.badge && (
              <span className="absolute top-0.5 left-0.5 flex size-3 items-center justify-center rounded-full bg-[#555] text-[10px] leading-none font-bold text-white">
                {app.badge}
              </span>
            )}
          </button>
        ))}
      </div>
    </div>
    <div className="flex items-center text-[13px] font-bold">
      <svg width="16" height="18" viewBox="0 0 16 18" fill="none" aria-hidden="true">
        <path d="M8 1.500c2 1.500 4 2 6.500 2C15 10 12.500 14 8 16.500 3.500 14 1 10 1.500 3.500c2.500 0 4.500-.5 6.500-2z" stroke="currentColor" strokeWidth="1.500" />
        <path d="M8 4.500c1.300.8 2.500 1.200 4 1.300 0 3.700-1.500 6-4 7.700-2.500-1.700-4-4-4-7.700 1.500-.1 2.700-.5 4-1.300z" fill="currentColor" />
      </svg>
      <svg width="16" height="16" viewBox="0 0 16 16" className="ml-2.5" aria-hidden="true">
        <path d="M0 9c4-1 4-6 8-7 3 0 6 2 6 5-2 2-2 4-1 7z" fill="currentColor" />
        <path d="M4 12l4 2c-1 2-4 1-4-2z" fill="currentColor" />
        <circle cx="12.500" cy="3.500" r="3.500" fill="currentColor" stroke="#2f2f2f" />
      </svg>
      <span className="ml-1.5">1</span>
      <svg width="16" height="16" viewBox="0 0 16 16" className="ml-2" aria-hidden="true">
        <path d="M5.500 1h5v5h-5zM0 11h5v5H0zM11 11h5v5h-5z" fill="currentColor" />
        <path d="M8 6v3M2.500 11V8.500h11V11" fill="none" stroke="currentColor" />
      </svg>
      <svg width="16" height="16" viewBox="0 0 16 16" fill="none" className="ml-2.5" aria-hidden="true">
        <path d="M1 5h3l4-4v14l-4-4H1z" fill="currentColor" />
        <path d="M9.500 5.500c1.300 1.500 1.300 3.500 0 5M11.500 3c2.500 3 2.500 7 0 10" stroke="currentColor" strokeWidth="1.500" />
        <path d="M13.500 1.500c3 4 3 9 0 13" stroke="#888" strokeWidth="1.500" />
      </svg>
      <time className="ml-3">14:16</time>
    </div>
  </footer>
);

const App = () => (
  <div className={clsx("relative flex h-screen flex-col overflow-hidden bg-[#f5f5f5]", UI_FONT)}>
    <TitleBar />
    <MenuBar />
    <Toolbar />
    <main className="flex min-h-0 flex-1">
      <div className="flex min-w-0 flex-1 flex-col">
        <FormulaBar />
        <SheetArea />
      </div>
      <Sidebar />
    </main>
    <div className="flex h-[21px] shrink-0 items-center justify-end border-t border-[#b5b5b5] bg-[#f5f5f5] pr-[26px]">
      <span className="h-[14px] w-px bg-[#d3d3d3]" />
    </div>
    <Taskbar />
    <ChartWizard />
  </div>
);

export default App;
